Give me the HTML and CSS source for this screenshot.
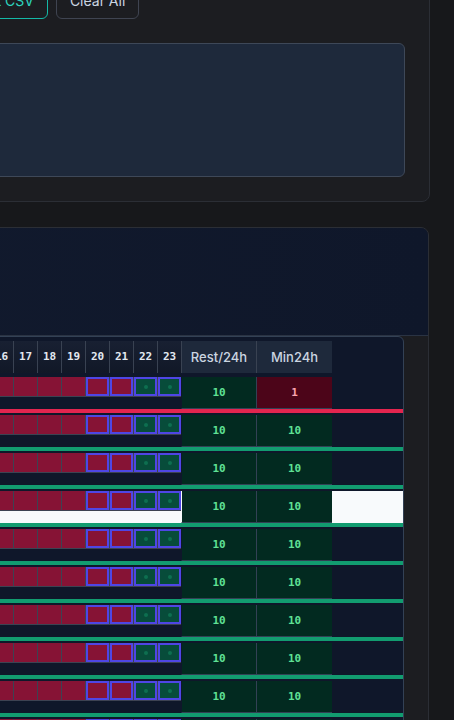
FILE: index.html
```html
<!DOCTYPE html>
<html lang="en">
<head>
<meta charset="utf-8">
<title>Roster</title>
<link rel="stylesheet" href="styles.css">
</head>
<body>
<main class="page">
  <section class="card card-import">
    <div class="toolbar">
      <span class="toolbar-hint">Paste roster CSV below (name, 24 hourly states)</span>
      <button class="btn btn-accent">Import CSV</button>
      <button class="btn">Clear All</button>
    </div>
    <textarea class="csv-input" aria-label="CSV data"></textarea>
  </section>

  <section class="card card-schedule">
    <header class="schedule-head">
      <h2 class="schedule-title">Rest compliance</h2>
    </header>
    <div class="schedule-body">
      <div class="grid-wrap">
        <div class="grid-row thead">
          <div class="th-name">Name</div>
          <span class="hh">0</span><span class="hh">1</span><span class="hh">2</span><span class="hh">3</span><span class="hh">4</span><span class="hh">5</span><span class="hh">6</span><span class="hh">7</span><span class="hh">8</span><span class="hh">9</span><span class="hh">10</span><span class="hh">11</span><span class="hh">12</span><span class="hh">13</span><span class="hh">14</span><span class="hh">15</span><span class="hh">16</span><span class="hh">17</span><span class="hh">18</span><span class="hh">19</span><span class="hh">20</span><span class="hh">21</span><span class="hh">22</span><span class="hh">23</span>
          <div class="th">Rest/24h</div>
          <div class="th">Min24h</div>
          <div class="th-fill"></div>
        </div>

        <div class="grid-row row bad">
          <div class="name">Crew 01</div>
          <span class="h g"></span><span class="h g"></span><span class="h g"></span><span class="h g"></span><span class="h g"></span><span class="h g"></span><span class="h r"></span><span class="h r"></span><span class="h r"></span><span class="h r"></span><span class="h r"></span><span class="h r"></span><span class="h r"></span><span class="h r"></span><span class="h r"></span><span class="h r"></span><span class="h r"></span><span class="h r"></span><span class="h r"></span><span class="h r"></span><span class="h r m"></span><span class="h r m"></span><span class="h g m"></span><span class="h g m"></span>
          <div class="tot ok">10</div>
          <div class="tot low">1</div>
          <div class="fill"></div>
        </div>

        <div class="grid-row row">
          <div class="name">Crew 02</div>
          <span class="h g"></span><span class="h g"></span><span class="h g"></span><span class="h g"></span><span class="h g"></span><span class="h g"></span><span class="h r"></span><span class="h r"></span><span class="h r"></span><span class="h r"></span><span class="h r"></span><span class="h r"></span><span class="h r"></span><span class="h r"></span><span class="h r"></span><span class="h r"></span><span class="h r"></span><span class="h r"></span><span class="h r"></span><span class="h r"></span><span class="h r m"></span><span class="h r m"></span><span class="h g m"></span><span class="h g m"></span>
          <div class="tot ok">10</div>
          <div class="tot ok">10</div>
          <div class="fill"></div>
        </div>

        <div class="grid-row row">
          <div class="name">Crew 03</div>
          <span class="h g"></span><span class="h g"></span><span class="h g"></span><span class="h g"></span><span class="h g"></span><span class="h g"></span><span class="h r"></span><span class="h r"></span><span class="h r"></span><span class="h r"></span><span class="h r"></span><span class="h r"></span><span class="h r"></span><span class="h r"></span><span class="h r"></span><span class="h r"></span><span class="h r"></span><span class="h r"></span><span class="h r"></span><span class="h r"></span><span class="h r m"></span><span class="h r m"></span><span class="h g m"></span><span class="h g m"></span>
          <div class="tot ok">10</div>
          <div class="tot ok">10</div>
          <div class="fill"></div>
        </div>

        <div class="grid-row row selected">
          <div class="name">Crew 04</div>
          <span class="h g"></span><span class="h g"></span><span class="h g"></span><span class="h g"></span><span class="h g"></span><span class="h g"></span><span class="h r"></span><span class="h r"></span><span class="h r"></span><span class="h r"></span><span class="h r"></span><span class="h r"></span><span class="h r"></span><span class="h r"></span><span class="h r"></span><span class="h r"></span><span class="h r"></span><span class="h r"></span><span class="h r"></span><span class="h r"></span><span class="h r m"></span><span class="h r m"></span><span class="h g m"></span><span class="h g m"></span>
          <div class="tot ok">10</div>
          <div class="tot ok">10</div>
          <div class="fill"></div>
        </div>

        <div class="grid-row row">
          <div class="name">Crew 05</div>
          <span class="h g"></span><span class="h g"></span><span class="h g"></span><span class="h g"></span><span class="h g"></span><span class="h g"></span><span class="h r"></span><span class="h r"></span><span class="h r"></span><span class="h r"></span><span class="h r"></span><span class="h r"></span><span class="h r"></span><span class="h r"></span><span class="h r"></span><span class="h r"></span><span class="h r"></span><span class="h r"></span><span class="h r"></span><span class="h r"></span><span class="h r m"></span><span class="h r m"></span><span class="h g m"></span><span class="h g m"></span>
          <div class="tot ok">10</div>
          <div class="tot ok">10</div>
          <div class="fill"></div>
        </div>

        <div class="grid-row row">
          <div class="name">Crew 06</div>
          <span class="h g"></span><span class="h g"></span><span class="h g"></span><span class="h g"></span><span class="h g"></span><span class="h g"></span><span class="h r"></span><span class="h r"></span><span class="h r"></span><span class="h r"></span><span class="h r"></span><span class="h r"></span><span class="h r"></span><span class="h r"></span><span class="h r"></span><span class="h r"></span><span class="h r"></span><span class="h r"></span><span class="h r"></span><span class="h r"></span><span class="h r m"></span><span class="h r m"></span><span class="h g m"></span><span class="h g m"></span>
          <div class="tot ok">10</div>
          <div class="tot ok">10</div>
          <div class="fill"></div>
        </div>

        <div class="grid-row row">
          <div class="name">Crew 07</div>
          <span class="h g"></span><span class="h g"></span><span class="h g"></span><span class="h g"></span><span class="h g"></span><span class="h g"></span><span class="h r"></span><span class="h r"></span><span class="h r"></span><span class="h r"></span><span class="h r"></span><span class="h r"></span><span class="h r"></span><span class="h r"></span><span class="h r"></span><span class="h r"></span><span class="h r"></span><span class="h r"></span><span class="h r"></span><span class="h r"></span><span class="h r m"></span><span class="h r m"></span><span class="h g m"></span><span class="h g m"></span>
          <div class="tot ok">10</div>
          <div class="tot ok">10</div>
          <div class="fill"></div>
        </div>

        <div class="grid-row row">
          <div class="name">Crew 08</div>
          <span class="h g"></span><span class="h g"></span><span class="h g"></span><span class="h g"></span><span class="h g"></span><span class="h g"></span><span class="h r"></span><span class="h r"></span><span class="h r"></span><span class="h r"></span><span class="h r"></span><span class="h r"></span><span class="h r"></span><span class="h r"></span><span class="h r"></span><span class="h r"></span><span class="h r"></span><span class="h r"></span><span class="h r"></span><span class="h r"></span><span class="h r m"></span><span class="h r m"></span><span class="h g m"></span><span class="h g m"></span>
          <div class="tot ok">10</div>
          <div class="tot ok">10</div>
          <div class="fill"></div>
        </div>

        <div class="grid-row row">
          <div class="name">Crew 09</div>
          <span class="h g"></span><span class="h g"></span><span class="h g"></span><span class="h g"></span><span class="h g"></span><span class="h g"></span><span class="h r"></span><span class="h r"></span><span class="h r"></span><span class="h r"></span><span class="h r"></span><span class="h r"></span><span class="h r"></span><span class="h r"></span><span class="h r"></span><span class="h r"></span><span class="h r"></span><span class="h r"></span><span class="h r"></span><span class="h r"></span><span class="h r m"></span><span class="h r m"></span><span class="h g m"></span><span class="h g m"></span>
          <div class="tot ok">10</div>
          <div class="tot ok">10</div>
          <div class="fill"></div>
        </div>

        <div class="grid-row row">
          <div class="name">Crew 10</div>
          <span class="h g"></span><span class="h g"></span><span class="h g"></span><span class="h g"></span><span class="h g"></span><span class="h g"></span><span class="h r"></span><span class="h r"></span><span class="h r"></span><span class="h r"></span><span class="h r"></span><span class="h r"></span><span class="h r"></span><span class="h r"></span><span class="h r"></span><span class="h r"></span><span class="h r"></span><span class="h r"></span><span class="h r"></span><span class="h r"></span><span class="h r m"></span><span class="h r m"></span><span class="h g m"></span><span class="h g m"></span>
          <div class="tot ok">10</div>
          <div class="tot ok">10</div>
          <div class="fill"></div>
        </div>
      </div>
    </div>
  </section>
</main>
</body>
</html>
```

FILE: styles.css
```css
* {
  box-sizing: border-box;
}

html {
  overflow: hidden;
}

body {
  margin: 0;
  background: #17181b;
  color: #cbd5e1;
  font-family: Inter, "Noto Sans", "Liberation Sans", sans-serif;
}

.page {
  margin: -42px 24px 0 -600px;
  display: flex;
  flex-direction: column;
  gap: 24px;
}

.card {
  border: 1px solid #2b2e35;
  border-radius: 8px;
  background: #1c1d21;
}

/* ---------- import card ---------- */
.card-import {
  padding: 24px;
  display: flex;
  flex-direction: column;
  gap: 24px;
}

.toolbar {
  display: flex;
  align-items: center;
  gap: 8px;
}

.toolbar-hint {
  flex: 0 0 511px;
  font-size: 13px;
  color: #94a3b8;
}

.btn {
  height: 36px;
  padding: 0 13px;
  border: 1px solid #3f4451;
  border-radius: 6px;
  background: transparent;
  color: #cbd5e1;
  font-family: Inter, "Noto Sans", sans-serif;
  font-size: 14px;
  line-height: 20px;
}

.btn-accent {
  border-color: #14b8a6;
  color: #2dd4bf;
}

.csv-input {
  display: block;
  width: 100%;
  height: 134px;
  border: 1px solid #3e4858;
  border-radius: 6px;
  background: #1e293b;
  resize: none;
}

/* ---------- schedule card ---------- */
.card-schedule {
  overflow: hidden;
  margin-top: 1px;
  margin-right: 1px;
}

.schedule-head {
  height: 108px;
  padding: 20px 24px;
  background: linear-gradient(90deg, #131c30 0%, #0f172a 100%);
  border-bottom: 1px solid #2a3343;
}

.schedule-title {
  margin: 0;
  font-size: 18px;
  color: #e2e8f0;
}

.schedule-body {
  padding: 0 24px 24px;
}

.grid-wrap {
  border: 1px solid #334155;
  border-radius: 6px;
  background: #0f172a;
  padding-top: 4px;
  overflow: hidden;
}

.grid-row {
  display: grid;
  grid-template-columns: 179px repeat(24, 24px) 75px 76px 1fr;
  align-items: start;
}

/* header */
.thead {
  height: 32px;
  margin-bottom: 4px;
}

.th-name {
  height: 32px;
  padding: 0 10px;
  font-size: 13px;
  line-height: 32px;
}

.hh {
  height: 32px;
  border-left: 1px solid #394252;
  background: linear-gradient(#182032, #111827);
  color: #e2e8f0;
  font-family: "DejaVu Sans Mono", monospace;
  font-size: 11px;
  font-weight: bold;
  line-height: 32px;
  text-align: center;
}

.th {
  height: 32px;
  border-left: 1px solid #394252;
  background: #1e293b;
  color: #cbd5e1;
  font-size: 13px;
  font-weight: 500;
  line-height: 32px;
  text-align: center;
}

.th-fill {
  height: 32px;
}

/* body rows */
.row {
  height: 36px;
  margin-bottom: 2px;
  border-bottom: 4px solid #129c70;
}

.row.bad {
  border-bottom-color: #e3254f;
}

.row.selected {
  background: #f8fafc;
}

.name {
  height: 32px;
  padding: 0 10px;
  font-size: 12px;
  line-height: 32px;
  color: #cbd5e1;
}

.h {
  display: flex;
  align-items: center;
  justify-content: center;
  height: 20px;
  border-left: 1px solid #3d4252;
  border-bottom: 1px solid #3d4252;
}

.h.r {
  background: #861335;
  background-clip: padding-box;
}

.h.g {
  background: #074c3a;
  background-clip: padding-box;
}

.h.g::after {
  content: "";
  width: 4px;
  height: 4px;
  border-radius: 50%;
  background: #0d6f50;
}

.h.m {
  box-shadow: inset 0 0 0 2px #4f46e5;
}

.tot {
  height: 32px;
  border-left: 1px solid #334155;
  border-bottom: 1px solid #334155;
  background-clip: padding-box;
  font-family: "DejaVu Sans Mono", monospace;
  font-size: 11px;
  font-weight: bold;
  line-height: 31px;
  text-align: center;
}

.tot.ok {
  background-color: #022a20;
  color: #5fe195;
}

.tot.low {
  background-color: #4c0519;
  color: #fda4af;
}

.tot.ok:nth-child(26) {
  border-left-color: transparent;
}

.fill {
  height: 32px;
}
```
